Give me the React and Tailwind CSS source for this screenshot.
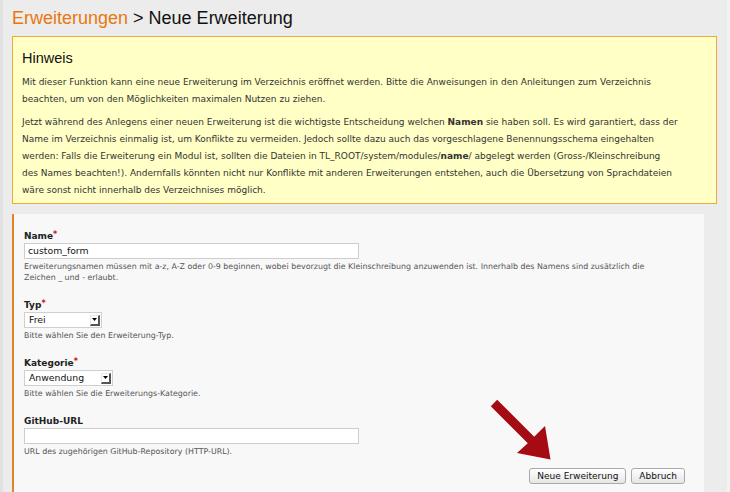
function Label({ children, required }) {
  return (
    <div className="text-[9px] font-bold leading-[12px] text-[#222] mb-[1px]">
      {children}
      {required && <span className="text-[#d01010] text-[8px] align-top relative top-[-1px]">*</span>}
    </div>
  );
}

function Help({ children }) {
  return <div className="mt-[2px] text-[7.9px] leading-[11px] text-[#555] whitespace-nowrap">{children}</div>;
}

function SelectBox({ value, width }) {
  return (
    <div className={`h-[16px] ${width} bg-white border border-[#cfcfcf] flex items-center justify-between pl-[4px] pr-[1px]`}>
      <span className="text-[9.3px] leading-[14px] text-[#111]">{value}</span>
      <span className="w-[10px] h-[11px] bg-white border-t border-l border-[#e8e8e8] border-r-2 border-b-2 border-r-[#555] border-b-[#555] flex items-center justify-center">
        <svg width="5" height="3" viewBox="0 0 5 3"><path d="M0 0H5L2.5 3Z" fill="#000" /></svg>
      </span>
    </div>
  );
}

export default function App() {
  return (
    <div className="relative w-[730px] h-[492px] overflow-hidden bg-[#ececec] flex font-['DejaVu_Sans',sans-serif]">
      <div className="w-[3px] bg-[#e1e1e1] shrink-0" />
      <div className="flex-1 pl-[9px] pr-[10px] flex flex-col min-w-0">
        <h1 className="font-['Liberation_Sans',Arial,sans-serif] text-[18px] leading-[22px] pt-[7px] text-[#111]">
          <span className="text-[#e8780e]">Erweiterungen</span> &gt; Neue Erweiterung
        </h1>
        <div className="mt-[7px] h-[168px] shrink-0 border border-[#f4a73a] bg-[#ffffc6] pl-[9px] pt-[12px]">
          <h2 className="font-['Liberation_Sans',Arial,sans-serif] text-[14.5px] leading-[18px] text-[#111]">Hinweis</h2>
          <p className="mt-[7px] text-[9px] leading-[17px] text-[#333] whitespace-nowrap">
            Mit dieser Funktion kann eine neue Erweiterung im Verzeichnis eröffnet werden. Bitte die Anweisungen in den Anleitungen zum Verzeichnis
            <br />
            beachten, um von den Möglichkeiten maximalen Nutzen zu ziehen.
          </p>
          <p className="mt-[6px] text-[9px] leading-[17px] text-[#333] whitespace-nowrap">
            Jetzt während des Anlegens einer neuen Erweiterung ist die wichtigste Entscheidung welchen <b>Namen</b> sie haben soll. Es wird garantiert, dass der
            <br />
            Name im Verzeichnis einmalig ist, um Konflikte zu vermeiden. Jedoch sollte dazu auch das vorgeschlagene Benennungsschema eingehalten
            <br />
            werden: Falls die Erweiterung ein Modul ist, sollten die Dateien in TL_ROOT/system/modules/<b>name</b>/ abgelegt werden (Gross-/Kleinschreibung
            <br />
            des Names beachten!). Andernfalls könnten nicht nur Konflikte mit anderen Erweiterungen entstehen, auch die Übersetzung von Sprachdateien
            <br />
            wäre sonst nicht innerhalb des Verzeichnises möglich.
          </p>
        </div>
        <div className="mt-[10px] mr-[13px] flex-1 bg-[#f8f8f8] border-l-2 border-[#e2832a] pl-[10px] pr-[19px] pt-[16px]">
          <div className="mb-[16px]">
            <Label required>Name</Label>
            <div className="h-[16px] w-[335px] bg-white border border-[#cdcdcd] flex items-center px-[3px]">
              <span className="text-[9.3px] leading-[14px] text-[#111]">custom_form</span>
            </div>
            <Help>
              Erweiterungsnamen müssen mit a-z, A-Z oder 0-9 beginnen, wobei bevorzugt die Kleinschreibung anzuwenden ist. Innerhalb des Namens sind zusätzlich die
              <br />
              Zeichen _ und - erlaubt.
            </Help>
          </div>
          <div className="mb-[16px]">
            <Label required>Typ</Label>
            <SelectBox value="Frei" width="w-[78px]" />
            <Help>Bitte wählen Sie den Erweiterung-Typ.</Help>
          </div>
          <div className="mb-[16px]">
            <Label required>Kategorie</Label>
            <SelectBox value="Anwendung" width="w-[89px]" />
            <Help>Bitte wählen Sie die Erweiterungs-Kategorie.</Help>
          </div>
          <div>
            <Label>GitHub-URL</Label>
            <div className="h-[16px] w-[335px] bg-white border border-[#cdcdcd]" />
            <Help>URL des zugehörigen GitHub-Repository (HTTP-URL).</Help>
          </div>
          <div className="mt-[11px] flex justify-end gap-[5px]">
            <button className="h-[16px] px-[7px] rounded-[3px] border border-[#a9a9a9] bg-gradient-to-b from-white to-[#e6e6e6] text-[9px] leading-[14px] text-[#111]">
              Neue Erweiterung
            </button>
            <button className="h-[16px] px-[7px] rounded-[3px] border border-[#a9a9a9] bg-gradient-to-b from-white to-[#e6e6e6] text-[9px] leading-[14px] text-[#111]">
              Abbruch
            </button>
          </div>
        </div>
      </div>
      <div className="w-[3px] bg-[#f2f2f2] shrink-0" />
      <svg className="absolute inset-0 pointer-events-none" width="730" height="492" viewBox="0 0 730 492">
        <polygon
          points="490.8,406.2 497.2,399.8 534.2,436.8 545,426 550.5,459.5 517,453 527.8,443.2"
          fill="#a50b12"
        />
      </svg>
    </div>
  );
}
